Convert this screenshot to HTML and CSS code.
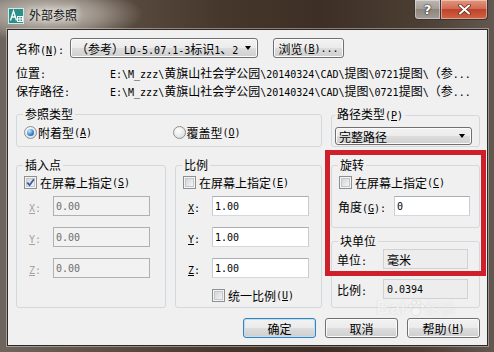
FILE: index.html
```html
<!DOCTYPE html>
<html lang="zh-CN">
<head>
<meta charset="utf-8">
<title>外部参照</title>
<link rel="stylesheet" href="styles.css">
</head>
<body>
<div class="win">
  <div class="titlebar">
    <svg class="appicon" width="16" height="16" viewBox="0 0 16 16">
      <rect x="0.5" y="0.5" width="15" height="15" fill="#2b8f88" stroke="#cfe9e6"/>
      <path d="M2.5 12.5 L5.5 3 L8.5 12.5 M3.8 9 H7.2" stroke="#fff" stroke-width="1.3" fill="none"/>
      <rect x="9.5" y="8.5" width="5" height="5" fill="none" stroke="#fff"/>
      <path d="M12 8.5 V13.5 M9.5 11 H14.5" stroke="#fff"/>
    </svg>
    <span class="title">外部参照</span>
    <div class="caps">
      <span class="cap help">?</span>
      <span class="cap close">
        <svg width="13" height="11" viewBox="0 0 13 11">
          <path d="M2 1.5 L11 9.5 M11 1.5 L2 9.5" stroke="#6b2a1c" stroke-width="3.6" stroke-linecap="round"/>
          <path d="M2 1.5 L11 9.5 M11 1.5 L2 9.5" stroke="#fff" stroke-width="2" stroke-linecap="round"/>
        </svg>
      </span>
    </div>
  </div>

  <div class="client">
    <div class="namerow">
      <span class="lbl namelbl">名称<span class="a">(<u>N</u>):</span></span>
      <div class="combo namecombo"><span>（参考）<span class="a">LD-5.07.1-3</span>标识<span class="a">1</span>、<span class="a">2</span></span><i class="arrow"></i></div>
      <div class="btn browse">浏览<span class="a">(<u>B</u>)...</span></div>
    </div>

    <div class="info">
      <span>位置<span class="a">:</span></span>
      <span class="path"><span class="a">E:\M_zzz\</span>黄旗山社会学公园<span class="a">\20140324\CAD\</span>提图<span class="a">\0721</span>提图<span class="a">\</span>（参<span class="a">...</span></span>
      <span>保存路径<span class="a">:</span></span>
      <span class="path"><span class="a">E:\M_zzz\</span>黄旗山社会学公园<span class="a">\20140324\CAD\</span>提图<span class="a">\0721</span>提图<span class="a">\</span>（参<span class="a">...</span></span>
    </div>

    <div class="grid">
      <fieldset class="grp reftype">
        <legend>参照类型</legend>
        <div class="gbody radios">
          <span class="opt"><i class="rb on"></i>附着型<span class="a">(<u>A</u>)</span></span>
          <span class="opt"><i class="rb"></i>覆盖型<span class="a">(<u>O</u>)</span></span>
        </div>
      </fieldset>

      <fieldset class="grp pathtype">
        <legend>路径类型<span class="a">(<u>P</u>)</span></legend>
        <div class="gbody">
          <div class="combo pathcombo"><span>完整路径</span><i class="arrow"></i></div>
        </div>
      </fieldset>

      <fieldset class="grp insert">
        <legend>插入点</legend>
        <div class="gbody">
          <div class="chkrow"><i class="cb on"><svg width="9" height="9" viewBox="0 0 9 9"><path d="M1.2 4.6 L3.6 7.2 L7.9 1.2" stroke="#3b5aa4" stroke-width="1.8" fill="none"/></svg></i>在屏幕上指定<span class="a">(<u>S</u>)</span></div>
          <div class="xrow first"><span class="xl dis"><span class="a"><u>X</u>:</span></span><span class="tb dis">0.00</span></div>
          <div class="xrow"><span class="xl dis"><span class="a"><u>Y</u>:</span></span><span class="tb dis">0.00</span></div>
          <div class="xrow"><span class="xl dis"><span class="a"><u>Z</u>:</span></span><span class="tb dis">0.00</span></div>
        </div>
      </fieldset>

      <fieldset class="grp scale">
        <legend>比例</legend>
        <div class="gbody">
          <div class="chkrow"><i class="cb"></i>在屏幕上指定<span class="a">(<u>E</u>)</span></div>
          <div class="xrow first"><span class="xl"><span class="a"><u>X</u>:</span></span><span class="tb">1.00</span></div>
          <div class="xrow"><span class="xl"><span class="a"><u>Y</u>:</span></span><span class="tb">1.00</span></div>
          <div class="xrow"><span class="xl"><span class="a"><u>Z</u>:</span></span><span class="tb">1.00</span></div>
          <div class="chkrow unirow"><i class="cb"></i>统一比例<span class="a">(<u>U</u>)</span></div>
        </div>
      </fieldset>

      <div class="col3">
        <fieldset class="grp rot">
          <legend>旋转</legend>
          <div class="gbody">
            <div class="chkrow"><i class="cb"></i>在屏幕上指定<span class="a">(<u>C</u>)</span></div>
            <div class="xrow first anglerow"><span class="xl">角度<span class="a">(<u>G</u>):</span></span><span class="tb">0</span></div>
          </div>
        </fieldset>
        <fieldset class="grp units">
          <legend>块单位</legend>
          <div class="gbody">
            <div class="urow"><span class="ul">单位<span class="a">:</span></span><span class="ro">毫米</span></div>
            <div class="urow second"><span class="ul">比例<span class="a">:</span></span><span class="ro"><span class="a">0.0394</span></span></div>
          </div>
        </fieldset>
      </div>
    </div>

    <div class="btnrow">
      <div class="btn dlg def">确定</div>
      <div class="btn dlg">取消</div>
      <div class="btn dlg">帮助<span class="a">(<u>H</u>)</span></div>
    </div>

    <div class="mark"></div>
    <div class="wm"><span class="wm-b">Bai</span><svg width="20" height="20" viewBox="0 0 22 22"><g fill="rgba(255,255,255,.7)" stroke="rgba(150,150,150,.35)"><ellipse cx="11" cy="15" rx="5" ry="4.5"/><circle cx="5" cy="9" r="2.3"/><circle cx="9" cy="5" r="2.3"/><circle cx="14" cy="5" r="2.3"/><circle cx="18" cy="9" r="2.3"/></g></svg><span class="wm-j">经验</span></div>
  </div>
</div>
</body>
</html>
```

FILE: styles.css
```css
* { box-sizing: border-box; }
html, body { margin: 0; padding: 0; }
body {
  width: 494px; height: 352px; overflow: hidden;
  font-family: "Noto Sans CJK SC", "Noto Sans", sans-serif;
  font-size: 12px; color: #000; background: #3e3128;
}
.a { font-family: "DejaVu Sans Mono", "Liberation Mono", monospace; font-size: 10px; }
u { text-decoration: underline; text-underline-offset: 1px; }

.win {
  width: 494px; height: 352px;
  display: flex; flex-direction: column;
  background:
    radial-gradient(ellipse 95px 28px at 48px 14px, rgba(214,210,202,.95), rgba(190,184,176,.6) 55%, rgba(150,140,130,0) 100%),
    linear-gradient(to right, #6e665e 0%, #5c4e42 22%, #46372c 45%, #3d2f25 65%, #4b3e33 85%, #625850 100%);
}

/* title bar */
.titlebar { height: 29px; flex: none; display: flex; align-items: flex-start; padding: 0 6px 0 8px; }
.appicon { margin-top: 8px; flex: none; }
.title {
  margin: 7px 0 0 5px; line-height: 16px; color: #111;
  text-shadow: 0 0 6px rgba(255,255,255,.8), 0 0 10px rgba(255,255,255,.6);
}
.caps { margin-left: auto; display: flex; }
.cap {
  height: 20px; display: flex; align-items: center; justify-content: center;
  border: 1px solid #3a3430; border-top: none;
  box-shadow: inset 0 0 0 1px rgba(255,255,255,.4);
}
.help {
  width: 27px; border-radius: 0 0 0 4px;
  background: linear-gradient(#bdb7b1, #a69f99 45%, #8d857e 50%, #a49d96);
  color: #fff; font: bold 13px "DejaVu Sans", sans-serif;
  text-shadow: 0 0 2px #222, 0 0 1px #000;
}
.close {
  width: 47px; border-left: none; border-radius: 0 0 4px 0;
  background: linear-gradient(#e3977f, #d06c53 45%, #c0432a 50%, #cf6545);
}

/* client area */
.client {
  position: relative;
  margin: 0 6px 0 7px; height: 317px;
  background: #f0f0f0;
  border: 1px solid #2d2926;
  box-shadow: 0 0 0 1px rgba(230,225,220,.45);
  padding: 8px 7px 7px 8px;
  display: flex; flex-direction: column;
}

.namerow { display: flex; align-items: center; height: 20px; }
.namelbl { width: 54px; flex: none; white-space: nowrap; }

.combo {
  height: 20px; display: flex; align-items: center; padding: 0 5px 0 5px;
  border: 1px solid #707070; border-radius: 3px;
  background: linear-gradient(#f2f2f2, #ebebeb 50%, #dddddd 50%, #cfcfcf);
  box-shadow: inset 0 0 0 1px #fbfbfb;
  white-space: nowrap;
}
.namecombo { width: 188px; }
.pathcombo { width: 137px; height: 18px; margin: 2px 0 0 3px; padding-left: 3px; }
.arrow {
  margin-left: auto; margin-right: 1px; width: 0; height: 0;
  border-left: 3.5px solid transparent; border-right: 3.5px solid transparent;
  border-top: 4px solid #000;
}

.btn {
  height: 20px; display: flex; align-items: center; justify-content: center;
  border: 1px solid #707070; border-radius: 3px;
  background: linear-gradient(#f2f2f2, #ebebeb 50%, #dddddd 50%, #cfcfcf);
  box-shadow: inset 0 0 0 1px #fbfbfb;
  white-space: nowrap;
}
.browse { margin-left: 15px; width: 71px; }

.info {
  margin-top: 5px; display: grid;
  grid-template-columns: 94px auto; grid-auto-rows: 18px;
  align-items: center; white-space: nowrap;
}

/* groups */
.grid {
  margin-top: 8px; display: grid;
  grid-template-columns: 150px 147px 149px;
  grid-template-rows: 40px 150px;
  column-gap: 9px; row-gap: 11px;
}
.grp {
  margin: 0; padding: 0; min-width: 0;
  border: 1px solid #d3d8dc; border-radius: 3px;
}
.grp legend { padding: 0 2px; margin-left: 6px; line-height: 14px; white-space: nowrap; }
.pathtype legend { margin-left: 3px; }
.reftype { grid-column: 1 / 3; }
.pathtype { grid-column: 3; }

.radios { display: flex; padding: 1px 0 0 7px; }
.opt { width: 150px; height: 18px; display: flex; align-items: center; white-space: nowrap; }
.rb {
  width: 13px; height: 13px; border-radius: 50%;
  border: 1px solid #8e8f8f; flex: none; position: relative;
  background: radial-gradient(circle at 40% 35%, #ffffff, #dfe1e3 70%, #c9cccf);
  margin-right: 1px;
}
.rb.on::after {
  content: ""; position: absolute; left: 2px; top: 2px; width: 7px; height: 7px; border-radius: 50%;
  background: radial-gradient(circle at 35% 30%, #c8ecff, #3a8ad8 55%, #144d9a);
}

.gbody { padding-top: 2px; }
.chkrow { height: 16px; display: flex; align-items: center; margin-left: 7px; white-space: nowrap; }
.cb {
  width: 13px; height: 13px; flex: none; position: relative; margin-right: 3px;
  border: 1px solid #8e8f8f; background: #f4f4f4;
  display: flex; align-items: center; justify-content: center;
}
.cb::before {
  content: ""; position: absolute; left: 1px; top: 1px; right: 1px; bottom: 1px;
  border: 1px solid #c3c7cb;
  background: linear-gradient(135deg, #d2d5d9, #f4f4f5);
}
.cb svg { position: relative; }

.xrow { display: flex; align-items: center; height: 20px; margin-top: 11px; padding-left: 12px; }
.xrow.first { margin-top: 6px; }
.xl { width: 24px; flex: none; white-space: nowrap; }
.xl.dis { color: #a3a3a3; }
.tb {
  width: 97px; height: 20px; display: flex; align-items: center; padding-left: 2px;
  border: 1px solid; border-color: #abadb3 #c9ccd2 #d5d8dd #c9ccd2;
  background: #fff;
  font-family: "DejaVu Sans Mono", "Liberation Mono", monospace; font-size: 10px;
}
.tb.dis { background: #f2f2f2; border-color: #adb1b4; color: #6d6d6d; }
.unirow { margin: 10px 0 0 36px; height: 14px; }

.col3 { grid-column: 3; grid-row: 2; display: flex; flex-direction: column; gap: 6px; }
.rot { height: 70px; }
.units { height: 74px; }
.anglerow { padding-left: 6px; }
.anglerow .xl { width: 56px; }
.anglerow .tb { width: 76px; }

.units .gbody { padding-top: 1px; }
.urow { display: flex; align-items: center; height: 20px; padding-left: 5px; }
.urow.second { margin-top: 10px; }
.ul { width: 46px; flex: none; white-space: nowrap; }
.ro {
  width: 85px; height: 20px; display: flex; align-items: center; padding-left: 3px;
  border: 1px solid #cfd2d5; background: #ededed;
}

/* dialog buttons */
.btnrow { margin-top: 10px; display: flex; justify-content: flex-end; gap: 9px; }
.dlg { width: 73px; }
.def { border-color: #3c7fb1; box-shadow: inset 0 0 0 1px #b6e1f8; }

/* annotation overlay */
.mark {
  position: absolute; left: 317px; top: 120px; width: 161px; height: 126px;
  border: 5px solid #cf1f2b;
}
.wm {
  position: absolute; left: 368px; top: 268px; height: 20px; display: flex; align-items: center;
  opacity: .5; pointer-events: none;
}
.wm-b {
  font: bold 19px/20px "Liberation Sans", sans-serif; color: rgba(255,255,255,.85);
  text-shadow: 0 0 1px rgba(120,120,120,.5);
}
.wm-j {
  font-size: 15px; line-height: 20px; color: rgba(255,255,255,.85);
  text-shadow: 0 0 1px rgba(120,120,120,.5);
}
```
